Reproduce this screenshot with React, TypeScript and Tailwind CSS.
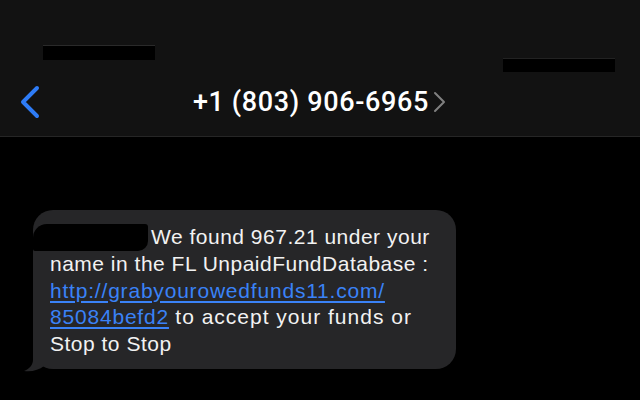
export default function App() {
  return (
    <div
      className="w-[640px] h-[400px] bg-black overflow-hidden"
      style={{ fontFamily: '"Liberation Sans", Arial, sans-serif' }}
    >
      <div className="h-[137px] bg-[#121212] border-b border-[#262626] flex flex-col">
        <div className="h-[80px] flex justify-between items-start">
          <div className="ml-[43px] mt-[45px] w-[112px] h-[15px] bg-black border-t border-[#2a2a2a]" />
          <div className="mr-[25px] mt-[58px] w-[112px] h-[14px] bg-black border-t border-[#222]" />
        </div>
        <div className="h-[44px] grid grid-cols-[1fr_auto_1fr] items-center">
          <div className="flex items-center">
            <svg className="ml-[18px]" width="24" height="36" viewBox="0 0 24 36">
              <polyline
                points="19,4 5,18 19,32"
                fill="none"
                stroke="#2e7cf6"
                strokeWidth="4"
                strokeLinecap="round"
                strokeLinejoin="round"
              />
            </svg>
          </div>
          <div className="flex items-center">
            <span
              className="text-[27px] leading-none font-medium text-white tracking-[0.65px]"
              style={{ fontFamily: 'Roboto, "Liberation Sans", sans-serif' }}
            >
              +1 (803) 906-6965
            </span>
            <svg className="ml-[4px]" width="14" height="22" viewBox="0 0 14 22">
              <polyline
                points="2,2 11,11 2,20"
                fill="none"
                stroke="#808080"
                strokeWidth="2"
                strokeLinecap="round"
                strokeLinejoin="round"
              />
            </svg>
          </div>
          <div />
        </div>
      </div>
      <div className="pt-[73px] pl-[33px]">
        <div className="relative w-[423px] h-[159px] bg-[#262628] rounded-[20px] pl-[17px] pt-[14px] text-[21px] leading-[26.5px] tracking-[0.5px] text-[#f2f2f2]">
          <svg
            className="absolute left-[-9px] bottom-[-3px]"
            width="30"
            height="26"
            viewBox="0 0 30 26"
          >
            <path d="M9 0 L9 14 C9 19 5 23 0 25 C8 26 15 24 20 20 L30 20 L30 0 Z" fill="#262628" />
          </svg>
          <span className="relative">
            <span className="inline-block align-[-7px] ml-[-17px] mr-[3px] w-[115px] h-[27px] bg-black rounded-tl-[14px] rounded-tr-[3px] rounded-br-[10px] rounded-bl-[2px]" />
            We found 967.21 under your
            <br />
            name in the FL UnpaidFundDatabase :
            <br />
            <span className="text-[#3a82f7] underline underline-offset-[3px] tracking-[0.8px]">
              http://grabyourowedfunds11.com/
            </span>
            <br />
            <span className="text-[#3a82f7] underline underline-offset-[3px] tracking-[0.8px]">85084befd2</span>{' '}
            <span className="tracking-[1px]">to accept your funds or</span>
            <br />
            Stop to Stop
          </span>
        </div>
      </div>
    </div>
  );
}
